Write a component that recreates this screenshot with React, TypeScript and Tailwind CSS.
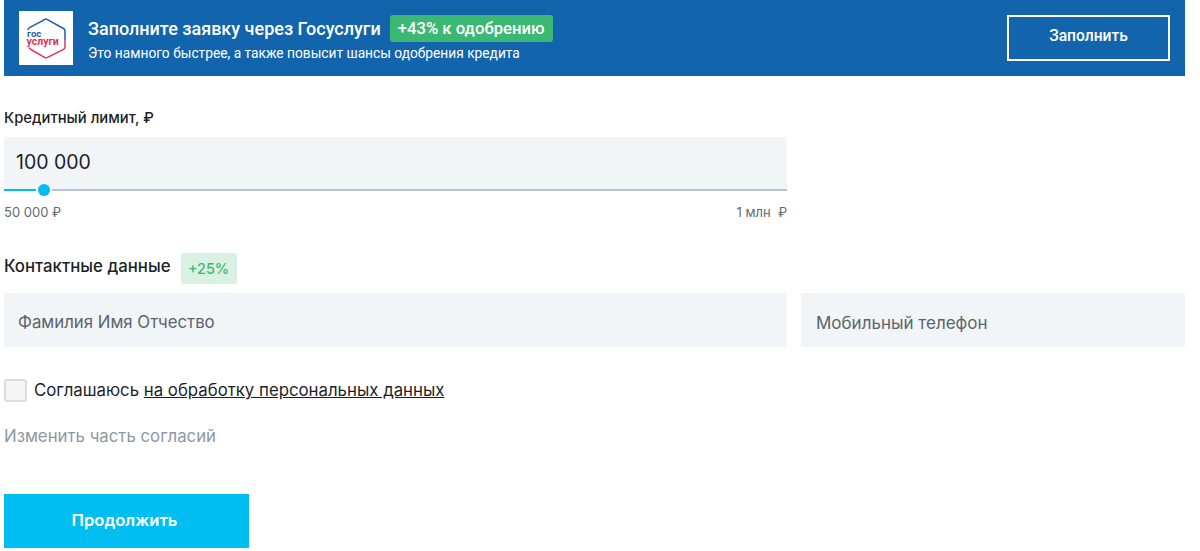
const GosuslugiLogo = () => (
  <svg width="54" height="54" viewBox="0 0 54 54" className="shrink-0 bg-white">
    {/* blue upper half of the hexagon */}
    <path d="M9 20 L9 19 Q9 17.500 10.500 16.700 L26 8.300 Q27 7.800 28 8.300 L44.500 17.500 Q46 18.300 46 20 L46 29" fill="none" stroke="#1a5fa8" strokeWidth="1.500" />
    {/* red lower half */}
    <path d="M46 29 L46 36 Q46 37.500 44.500 38.300 L28 46.700 Q27 47.200 26 46.700 L12 38.500 Q10.500 37.500 10 36.500" fill="none" stroke="#e4334f" strokeWidth="1.500" />
    <rect x="7" y="19" width="15" height="16" fill="white" />
    <rect x="22" y="26" width="19" height="9" fill="white" />
    <text x="8" y="26" fontFamily="Roboto, sans-serif" fontSize="9.500" fontWeight="700" fill="#1a5fa8">гос</text>
    <text x="7.500" y="33.500" fontFamily="Roboto, sans-serif" fontSize="10.500" fontWeight="700" fill="#e4334f">услуги</text>
  </svg>
);

export default function App() {
  return (
    <div className="h-[551px] w-[1200px] overflow-hidden bg-white pl-1 pr-[15px] font-['Inter',sans-serif] text-[#1c1f26]">
      {/* Gosuslugi banner */}
      <div className="flex h-[76px] items-center justify-between bg-[#1265ad] pl-[15px] pr-[15px] font-['Roboto',sans-serif] text-white">
        <div className="flex items-center">
          <GosuslugiLogo />
          <div className="ml-[15px]">
            <div className="flex items-center">
              <span className="text-[18px] leading-6 font-medium">Заполните заявку через Госуслуги</span>
              <span className="ml-[9px] flex h-[27px] items-center rounded-[3px] bg-[#3bb873] px-2 text-[16.700px] font-medium">
                +43% к одобрению
              </span>
            </div>
            <div className="mt-[3px] text-[13.750px] leading-4">Это намного быстрее, а также повысит шансы одобрения кредита</div>
          </div>
        </div>
        <button className="h-[46px] w-[163px] border-2 border-white pb-[2px] text-[15.600px] font-medium text-white">Заполнить</button>
      </div>

      {/* Credit limit */}
      <div className="mt-[33px] w-[783px]">
        <div className="text-[14.800px] leading-[18px] font-medium">Кредитный лимит, ₽</div>
        <div className="mt-[10px] h-[52px] bg-[#f2f5f8] pl-3 pt-[13px] text-[19.500px] leading-6">100 000</div>
        <div className="relative flex h-0.5">
          <div className="w-8 bg-[#00bef2]" />
          <div className="ml-4 flex-1 bg-[#b7c5d3]" />
          <div className="absolute left-[34px] top-[-5px] size-3 rounded-full bg-[#00bef2]" />
        </div>
        <div className="mt-[13px] flex justify-between text-[13px] leading-4 text-[#5f6b76]">
          <span>50 000 ₽</span>
          <span>1 млн &nbsp;₽</span>
        </div>
      </div>

      {/* Contact details */}
      <div className="mt-[33px] flex items-center">
        <span className="pb-1 text-[16.800px] font-medium">Контактные данные</span>
        <span className="ml-[10px] flex h-[31px] w-14 items-center justify-center rounded-[3px] bg-[#d9f1e3] text-[14.400px] font-medium text-[#3bb873]">
          +25%
        </span>
      </div>
      <div className="mt-[9px] flex gap-[14px]">
        <div className="flex h-[54px] w-[783px] items-center bg-[#f2f5f8] pl-[14px] pt-[6px] text-[16.800px] text-[#5b636b]">Фамилия Имя Отчество</div>
        <div className="flex h-[54px] flex-1 items-center bg-[#f2f5f8] pl-[15px] pt-2 text-[17px] text-[#5b636b]">Мобильный телефон</div>
      </div>

      {/* Consent */}
      <div className="mt-[31px] flex items-center">
        <span className="size-[23px] rounded-[3px] border-2 border-[#dcdcdc] bg-[#f5f5f5]" />
        <span className="ml-[7px] text-[16.800px] leading-6">
          Соглашаюсь <span className="underline">на обработку персональных данных</span>
        </span>
      </div>
      <div className="mt-[22px] text-[16.800px] leading-6 text-[#8c98a3]">Изменить часть согласий</div>

      <button className="mt-[46px] h-[54px] w-[245px] bg-[#00bef2] pr-1 pb-0.5 text-[16.600px] font-semibold text-white">Продолжить</button>
    </div>
  );
}
